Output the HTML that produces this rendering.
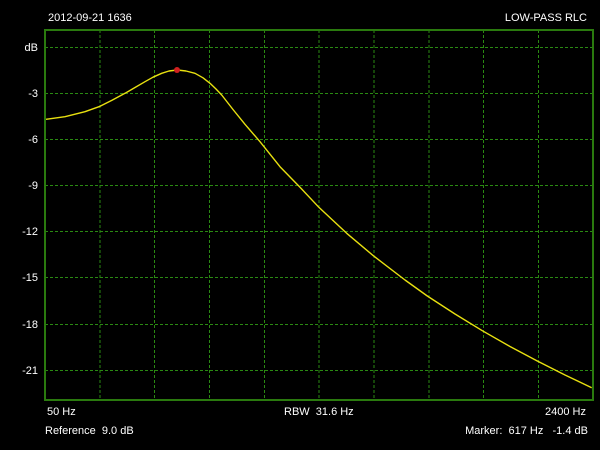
<!DOCTYPE html>
<html><head><style>
html,body{margin:0;padding:0;background:#000;}
body{width:600px;height:450px;position:relative;overflow:hidden;font-family:"Liberation Sans",sans-serif;font-size:11px;color:#fff;}
.t{position:absolute;white-space:nowrap;line-height:12px;}
.yl{position:absolute;width:38px;text-align:right;left:0;line-height:12px;}
</style></head><body>
<svg width="600" height="450" style="position:absolute;left:0;top:0">
<g stroke="#2a8a12" stroke-width="1" stroke-dasharray="3,2" fill="none">
<line x1="100" y1="30" x2="100" y2="400"/><line x1="154.5" y1="30" x2="154.5" y2="400"/>
<line x1="209.5" y1="30" x2="209.5" y2="400"/><line x1="264.5" y1="30" x2="264.5" y2="400"/>
<line x1="319" y1="30" x2="319" y2="400"/><line x1="374" y1="30" x2="374" y2="400"/>
<line x1="429" y1="30" x2="429" y2="400"/><line x1="483.5" y1="30" x2="483.5" y2="400"/>
<line x1="538.5" y1="30" x2="538.5" y2="400"/>
<line x1="45" y1="47.5" x2="593" y2="47.5"/><line x1="45" y1="93.5" x2="593" y2="93.5"/>
<line x1="45" y1="139.5" x2="593" y2="139.5"/><line x1="45" y1="185.5" x2="593" y2="185.5"/>
<line x1="45" y1="231.5" x2="593" y2="231.5"/><line x1="45" y1="277.5" x2="593" y2="277.5"/>
<line x1="45" y1="324.5" x2="593" y2="324.5"/><line x1="45" y1="370.5" x2="593" y2="370.5"/>
</g>
<rect x="45" y="30" width="548" height="370" fill="none" stroke="#2a7a0e" stroke-width="2"/>
<polyline points="46,119.3 65,116.7 85,111.7 99,106.7 112,100.2 125,93.3 135,87.5 145,81.7 153,77.2 161.7,73.3 169,71 177.3,70 186,71 195,73.3 203,77.8 210,83.3 216,89 221.7,95 233,109.5 245,124.3 260,141.7 280,166.7 300,187.3 318.3,206.7 346.7,233.3 373.3,255.7 405,280 427.3,296 455,314 482.3,330.7 510,346.5 537.3,361 565,375 591.7,387.7" fill="none" stroke="#e8e010" stroke-width="1.4" stroke-linejoin="round"/>
<circle cx="177" cy="70" r="3" fill="#d02020"/>
</svg>
<div class="t" style="left:48px;top:12px">2012-09-21 1636</div>
<div class="t" style="right:13px;top:12px">LOW-PASS RLC</div>
<div class="yl" style="top:42px">dB</div>
<div class="yl" style="top:88px">-3</div>
<div class="yl" style="top:134px">-6</div>
<div class="yl" style="top:180px">-9</div>
<div class="yl" style="top:226px">-12</div>
<div class="yl" style="top:272px">-15</div>
<div class="yl" style="top:319px">-18</div>
<div class="yl" style="top:365px">-21</div>
<div class="t" style="left:47px;top:406px">50 Hz</div>
<div class="t" style="left:284px;top:406px">RBW&nbsp; 31.6 Hz</div>
<div class="t" style="right:14px;top:406px">2400 Hz</div>
<div class="t" style="left:45px;top:425px">Reference&nbsp; 9.0 dB</div>
<div class="t" style="right:12px;top:425px">Marker:&nbsp; 617 Hz&nbsp;&nbsp; -1.4 dB</div>
</body></html>
